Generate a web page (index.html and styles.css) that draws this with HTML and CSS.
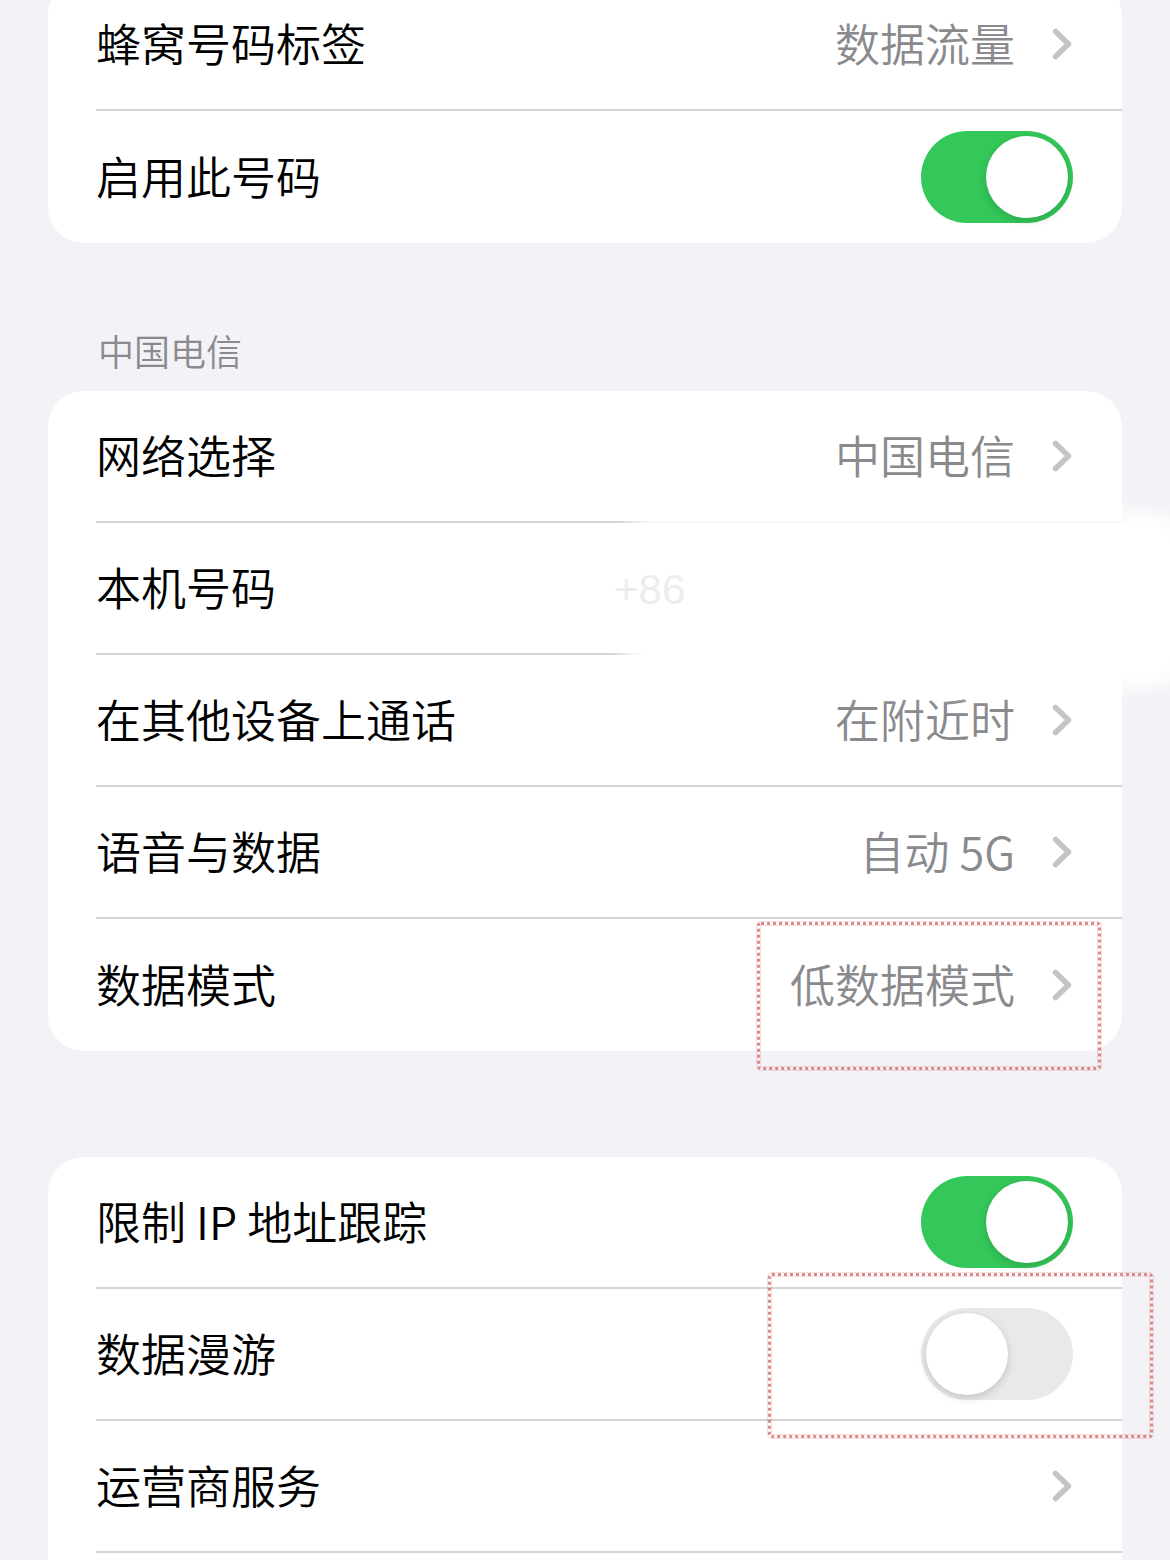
FILE: index.html
```html
<!DOCTYPE html>
<html lang="zh-CN">
<head>
<meta charset="utf-8">
<title>蜂窝网络</title>
<link rel="stylesheet" href="styles.css">
</head>
<body>
<div class="page">
  <div class="card card-first">
    <div class="row">
      <div class="row-inner">
        <span class="label">蜂窝号码标签</span>
        <span class="value">数据流量</span>
        <svg class="chev" viewBox="0 0 20 32" width="20" height="32"><path d="M3.5 3.5 L16.5 16 L3.5 28.5" fill="none" stroke="#c4c4c7" stroke-width="5.5" stroke-linecap="round" stroke-linejoin="round"/></svg>
      </div>
    </div>
    <div class="row">
      <div class="row-inner last">
        <span class="label">启用此号码</span>
        <span class="toggle on"><span class="knob"></span></span>
      </div>
    </div>
  </div>

  <div class="section-header">中国电信</div>

  <div class="card">
    <div class="row">
      <div class="row-inner">
        <span class="label">网络选择</span>
        <span class="value">中国电信</span>
        <svg class="chev" viewBox="0 0 20 32" width="20" height="32"><path d="M3.5 3.5 L16.5 16 L3.5 28.5" fill="none" stroke="#c4c4c7" stroke-width="5.5" stroke-linecap="round" stroke-linejoin="round"/></svg>
      </div>
    </div>
    <div class="row">
      <div class="row-inner">
        <span class="label">本机号码</span>
      </div>
    </div>
    <div class="row">
      <div class="row-inner">
        <span class="label">在其他设备上通话</span>
        <span class="value">在附近时</span>
        <svg class="chev" viewBox="0 0 20 32" width="20" height="32"><path d="M3.5 3.5 L16.5 16 L3.5 28.5" fill="none" stroke="#c4c4c7" stroke-width="5.5" stroke-linecap="round" stroke-linejoin="round"/></svg>
      </div>
    </div>
    <div class="row">
      <div class="row-inner">
        <span class="label">语音与数据</span>
        <span class="value">自动 5G</span>
        <svg class="chev" viewBox="0 0 20 32" width="20" height="32"><path d="M3.5 3.5 L16.5 16 L3.5 28.5" fill="none" stroke="#c4c4c7" stroke-width="5.5" stroke-linecap="round" stroke-linejoin="round"/></svg>
      </div>
    </div>
    <div class="row">
      <div class="row-inner last">
        <span class="label">数据模式</span>
        <span class="value">低数据模式</span>
        <svg class="chev" viewBox="0 0 20 32" width="20" height="32"><path d="M3.5 3.5 L16.5 16 L3.5 28.5" fill="none" stroke="#c4c4c7" stroke-width="5.5" stroke-linecap="round" stroke-linejoin="round"/></svg>
      </div>
    </div>
  </div>

  <div class="card card-third">
    <div class="row">
      <div class="row-inner">
        <span class="label">限制 IP 地址跟踪</span>
        <span class="toggle on"><span class="knob"></span></span>
      </div>
    </div>
    <div class="row">
      <div class="row-inner">
        <span class="label">数据漫游</span>
        <span class="toggle off"><span class="knob"></span></span>
      </div>
    </div>
    <div class="row">
      <div class="row-inner">
        <span class="label">运营商服务</span>
        <span class="value"></span>
        <svg class="chev" viewBox="0 0 20 32" width="20" height="32"><path d="M3.5 3.5 L16.5 16 L3.5 28.5" fill="none" stroke="#c4c4c7" stroke-width="5.5" stroke-linecap="round" stroke-linejoin="round"/></svg>
      </div>
    </div>
    <div class="row">
      <div class="row-inner">
        <span class="label"></span>
      </div>
    </div>
  </div>
</div>

<div class="redact"></div>
<div class="redact-text">+86</div>
<div class="mark mark-1"></div>
<div class="mark mark-2"></div>
</body>
</html>
```

FILE: styles.css
```css
html, body {
  margin: 0;
  padding: 0;
}
body {
  background: #f2f2f7;
  font-family: "Noto Sans CJK SC", "Noto Sans", sans-serif;
  font-weight: 350;
  position: relative;
  width: 1170px;
  height: 1560px;
  overflow: hidden;
}
.page {
  padding: 0 48px;
}
.card {
  background: #ffffff;
  border-radius: 36px;
  overflow: hidden;
}
.card-first {
  margin-top: -21px;
}
.card-third {
  margin-top: 106px;
}
.section-header {
  padding: 83px 0 0 50px;
  height: 48px;
  line-height: 48px;
  margin-bottom: 17px;
  font-size: 36px;
  color: #8a8a8e;
}
.row {
  padding-left: 48px;
}
.row-inner {
  height: 132px;
  box-sizing: border-box;
  border-bottom: 2px solid #d3d3d6;
  display: flex;
  align-items: center;
  padding-right: 49px;
}
.row-inner.last {
  border-bottom: none;
}
.label {
  font-size: 45px;
  color: #000;
  flex: 1;
  white-space: nowrap;
  position: relative;
  top: -2px;
}
.value {
  font-size: 45px;
  color: #8a8a8e;
  margin-right: 37px;
  white-space: nowrap;
  position: relative;
  top: -2px;
}
.chev {
  display: block;
  flex: none;
  margin-right: 1px;
}
.toggle {
  width: 152px;
  height: 92px;
  border-radius: 46px;
  position: relative;
  flex: none;
}
.toggle.on {
  background: #34c759;
}
.toggle.off {
  background: #e9e9eb;
}
.knob {
  position: absolute;
  top: 5px;
  width: 82px;
  height: 82px;
  border-radius: 50%;
  background: #fff;
  box-shadow: 0 3px 8px rgba(0, 0, 0, 0.16), 0 0 1px rgba(0, 0, 0, 0.06);
}
.toggle.on .knob {
  right: 5px;
}
.toggle.off .knob {
  left: 5px;
}
.redact {
  position: absolute;
  left: 625px;
  top: 512px;
  width: 560px;
  height: 176px;
  background: #ffffff;
  filter: blur(10px);
  border-radius: 30px;
}
.redact-text {
  position: absolute;
  left: 614px;
  top: 564px;
  font-family: "Liberation Sans", sans-serif;
  font-size: 42px;
  color: #ededee;
  line-height: 52px;
}
.mark {
  position: absolute;
  border: 3px dotted rgba(214, 110, 110, 0.8);
  border-radius: 4px;
  box-shadow: inset 0 0 0 1px rgba(230, 160, 160, 0.35), 0 0 0 1px rgba(230, 160, 160, 0.35);
}
.mark-1 {
  left: 757px;
  top: 922px;
  width: 338px;
  height: 142px;
}
.mark-2 {
  left: 768px;
  top: 1273px;
  width: 379px;
  height: 159px;
}
```
